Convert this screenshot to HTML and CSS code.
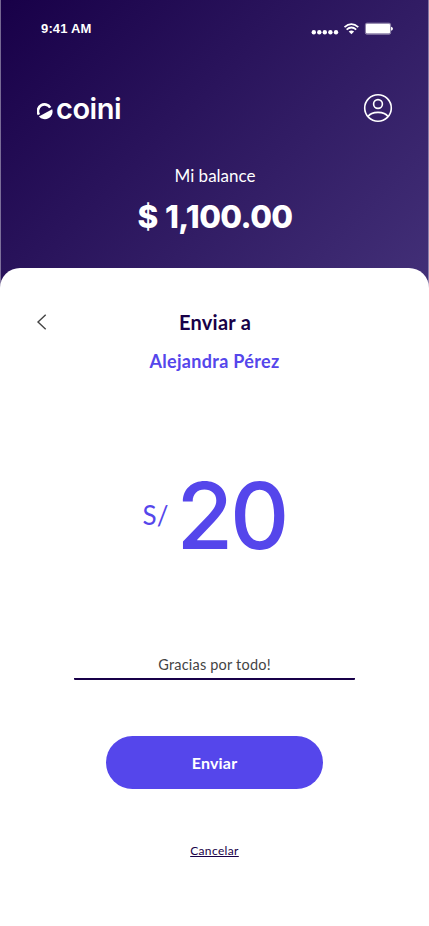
FILE: index.html
```html
<!DOCTYPE html>
<html lang="es">
<head>
<meta charset="utf-8">
<title>coini</title>
<link rel="stylesheet" href="styles.css">
</head>
<body>
<main class="screen">
  <header class="header">
    <div class="status">
      <span class="time">9:41 AM</span>
      <svg class="status-icons" width="82" height="14" viewBox="0 0 82 14">
        <g fill="#fff">
          <circle cx="2.8" cy="10.3" r="2.2"/><circle cx="8.3" cy="10.3" r="2.2"/><circle cx="13.8" cy="10.3" r="2.2"/><circle cx="19.4" cy="10.3" r="2.2"/><circle cx="25" cy="10.3" r="2.2"/>
          <path d="M37.7 9.6Q40.4 7.5 43.1 9.6L40.4 12.2Z"/>
          <rect x="55" y="1.8" width="24" height="9.8" rx="1"/>
          <path d="M80 4.7q2 .4 2 2t-2 2z"/>
        </g>
        <path d="M33.5 5.2Q40.4-1.1 47.3 5.2M35.6 7.6Q40.4 3.4 45.2 7.6" fill="none" stroke="#fff" stroke-width="1.7"/>
        <rect x="54.4" y="1.2" width="25.2" height="11" rx="1.5" fill="none" stroke="#fff" stroke-opacity=".5"/>
      </svg>
    </div>
    <div class="brand-row">
      <div class="brand">
        <svg width="16" height="17" viewBox="0 0 16 17">
          <path d="M1.9 11.6A6.4 6.4 0 0 1 13.2 4.6" fill="none" stroke="#fff" stroke-width="2.7"/>
          <path d="M1.9 13.4L15.2 6.2A7.7 7.7 0 0 1 1.9 13.4Z" fill="#fff"/>
        </svg>
        <span class="brand-name">coini</span>
      </div>
      <svg width="30" height="30" viewBox="0 0 30 30" fill="none" stroke="#fff" stroke-width="1.6">
        <circle cx="15" cy="15" r="13.3"/><circle cx="15" cy="11" r="4.4"/><path d="M5 23.6C8.5 18 21.5 18 25 23.6"/>
      </svg>
    </div>
    <div class="balance-label"><span>Mi balance</span></div>
    <div class="balance"><span>$ 1,100.00</span></div>
  </header>
  <section class="sheet">
    <div class="title-row">
      <svg width="12" height="18" viewBox="0 0 12 18" fill="none" stroke="#444" stroke-width="1.4"><path d="M9.7 1.8L2 9l7.7 7.2"/></svg>
      <h1 class="title">Enviar a</h1>
    </div>
    <div class="recipient"><span>Alejandra Pérez</span></div>
    <div class="amount"><span class="currency">S/</span><span class="value">20</span></div>
    <div class="note"><span>Gracias por todo!</span></div>
    <button class="send"><span>Enviar</span></button>
    <a class="cancel"><span>Cancelar</span></a>
  </section>
</main>
</body>
</html>
```

FILE: styles.css
```css
* { box-sizing: border-box; }
body { margin: 0; background: #fff; font-family: Lato, sans-serif; }
.screen { width: 429px; height: 926px; overflow: hidden; }
.header { height: 290px; padding: 20px 35px 0 36px; color: #fff; background: linear-gradient(135deg, #180048 0%, #433078 100%); border: solid rgba(255,255,255,.4); border-width: 0 1px; background-origin: border-box; }
.status { display: flex; justify-content: space-between; height: 18px; padding: 0 0 0 4px; }
.time { font: 700 13px/18px "Liberation Sans", sans-serif; letter-spacing: .15px; }
.status-icons { margin-top: 2px; }
.brand-row { display: flex; justify-content: space-between; margin-top: 55px; height: 30px; }
.brand { display: flex; align-items: center; gap: 3px; }
.brand svg { margin-top: 6px; }
.brand-name { font-family: Inter, sans-serif; font-size: 29px; line-height: 30px; font-weight: 600; letter-spacing: -.5px; padding-top: 2px; }
.balance-label { margin-top: 42px; text-align: center; font-size: 17px; line-height: 22px; }
.balance { margin-top: 11px; text-align: center; font-family: Inter, sans-serif; font-size: 31.5px; line-height: 38px; font-weight: 800; letter-spacing: -.6px; word-spacing: 1px; }
.sheet { position: relative; margin-top: -22px; height: 658px; padding-top: 40px; background: #fff; border-radius: 20px 20px 0 0; display: flex; flex-direction: column; align-items: center; }
.title-row { display: grid; grid-template-columns: 12px 1fr 12px; align-items: center; align-self: stretch; height: 28px; padding: 0 35px 0 36px; }
.title { margin: 0; text-align: center; color: #180048; font-size: 20px; line-height: 28px; font-weight: 700; letter-spacing: .25px; }
.recipient { margin-top: 13px; color: #5546eb; font-size: 18px; line-height: 24px; font-weight: 700; letter-spacing: .3px; }
.amount { display: flex; gap: 8px; margin-top: 92px; height: 100px; color: #5546eb; }
.currency { font-size: 26px; line-height: 100px; }
.value { font-family: Inter, sans-serif; font-size: 92px; line-height: 101px; font-weight: 500; letter-spacing: -3px; }
.note { width: 281px; height: 35px; margin-top: 80px; border-bottom: 2px solid #180048; border-radius: 1px; text-align: center; color: #444; font-size: 14.5px; line-height: 40px; letter-spacing: .2px; }
.send { width: 217px; height: 53px; margin-top: 56px; border: 0; border-radius: 27px; background: #5546eb; color: #fff; font: 700 16px/51px Lato, sans-serif; letter-spacing: .2px; padding: 0; }
.cancel { margin-top: 52px; color: #180048; font-size: 12px; line-height: 20px; letter-spacing: .35px; text-decoration: underline; }
```
